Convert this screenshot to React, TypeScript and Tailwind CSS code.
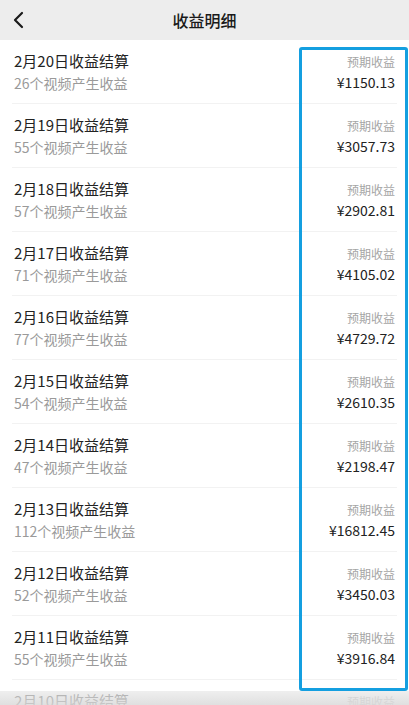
import React from "react";

const rows = [
  { d: "2月20日收益结算", n: "26个视频产生收益", v: "¥1150.13" },
  { d: "2月19日收益结算", n: "55个视频产生收益", v: "¥3057.73" },
  { d: "2月18日收益结算", n: "57个视频产生收益", v: "¥2902.81" },
  { d: "2月17日收益结算", n: "71个视频产生收益", v: "¥4105.02" },
  { d: "2月16日收益结算", n: "77个视频产生收益", v: "¥4729.72" },
  { d: "2月15日收益结算", n: "54个视频产生收益", v: "¥2610.35" },
  { d: "2月14日收益结算", n: "47个视频产生收益", v: "¥2198.47" },
  { d: "2月13日收益结算", n: "112个视频产生收益", v: "¥16812.45" },
  { d: "2月12日收益结算", n: "52个视频产生收益", v: "¥3450.03" },
  { d: "2月11日收益结算", n: "55个视频产生收益", v: "¥3916.84" },
  { d: "2月10日收益结算", n: "49个视频产生收益", v: "¥3201.56" },
];

export default function App() {
  return (
    <div
      className="relative w-[409px] h-[705px] overflow-hidden bg-white"
      style={{ fontFamily: '"Noto Sans CJK SC", "Noto Sans", sans-serif' }}
    >
      <div className="h-[40px] bg-[#ededed] flex items-center relative">
        <svg className="absolute left-[12px] top-[11px]" width="14" height="18" viewBox="0 0 14 18">
          <path d="M10 2 L3 9 L10 16" fill="none" stroke="#1a1a1a" strokeWidth="2.2" strokeLinecap="round" strokeLinejoin="round" />
        </svg>
        <div className="flex-1 text-center text-[16px] font-medium text-[#1a1a1a]">收益明细</div>
      </div>
      <div className="flex flex-col">
        {rows.map((r, i) => (
          <div key={i} className="h-[64px] flex items-center pl-[14px] pr-[14px] relative">
            <div className="flex-1 flex flex-col">
              <div className="text-[15px] leading-[20px] text-[#222]">{r.d}</div>
              <div className="text-[14px] leading-[20px] mt-[2px] text-[#9a9a9a]">{r.n}</div>
            </div>
            <div className="flex flex-col items-end">
              <div className="text-[12px] leading-[18px] text-[#a5a5a5]">预期收益</div>
              <div className="text-[14px] leading-[20px] mt-[1px] text-[#222]">{r.v}</div>
            </div>
            <div className="absolute left-[12px] right-[12px] bottom-0 h-px bg-[#f2f2f2]" />
          </div>
        ))}
      </div>
      <div className="absolute left-[299px] top-[47px] w-[109px] h-[644px] border-[3px] border-[#149fe0] rounded-[3px]" />
      <div className="absolute left-0 right-0 bottom-0 h-[14px] bg-gradient-to-b from-[#e8e8e8]/70 to-[#dcdcdc]/90" />
    </div>
  );
}
